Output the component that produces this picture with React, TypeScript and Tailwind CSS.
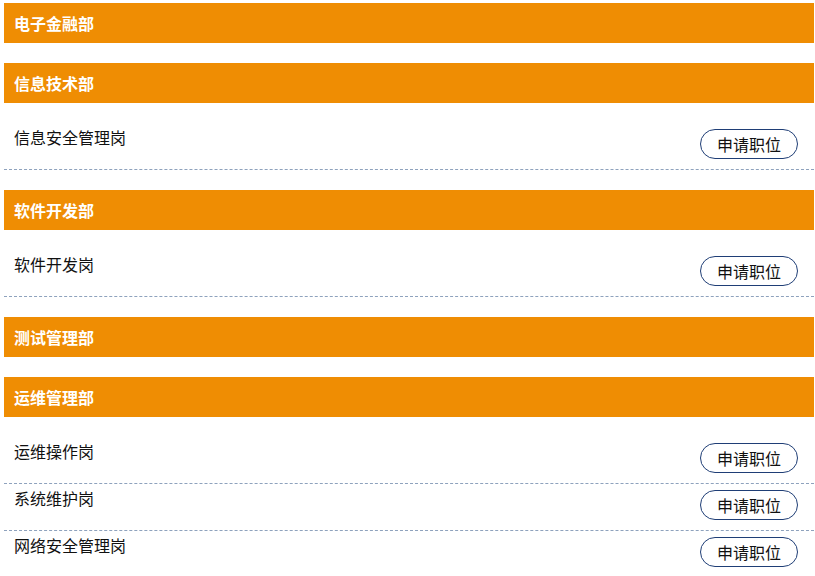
import React from 'react';

interface Dept {
  name: string;
  jobs: string[];
}

const depts: Dept[] = [
  { name: '电子金融部', jobs: [] },
  { name: '信息技术部', jobs: ['信息安全管理岗'] },
  { name: '软件开发部', jobs: ['软件开发岗'] },
  { name: '测试管理部', jobs: [] },
  { name: '运维管理部', jobs: ['运维操作岗', '系统维护岗', '网络安全管理岗'] },
];

const font = { fontFamily: '"Microsoft YaHei", "Noto Sans CJK SC", sans-serif' };

export default function App() {
  return (
    <div className="min-h-screen bg-white pt-[3px] pl-1 pr-px" style={font}>
      {depts.map(dept => (
        <section key={dept.name} className="mb-5">
          {/* Department bar */}
          <div className="h-10 bg-[#ef8d03] flex items-center pl-[10px] pb-px">
            <h2 className="text-white text-base font-bold leading-5">{dept.name}</h2>
          </div>

          {dept.jobs.length > 0 && (
            <ul className="pt-5">
              {dept.jobs.map(job => (
                <li key={job} className="h-[47px] flex justify-between items-start border-b border-dashed border-[#8ea2bd] pl-[10px] pr-[16px]">
                  <span className="pt-1 text-base leading-5 text-[#111]">{job}</span>
                  <button className="mt-[6px] h-[30px] w-[98px] rounded-full border border-[#1f3e76] text-base leading-5 text-[#111] bg-white">
                    申请职位
                  </button>
                </li>
              ))}
            </ul>
          )}
        </section>
      ))}
    </div>
  );
}
